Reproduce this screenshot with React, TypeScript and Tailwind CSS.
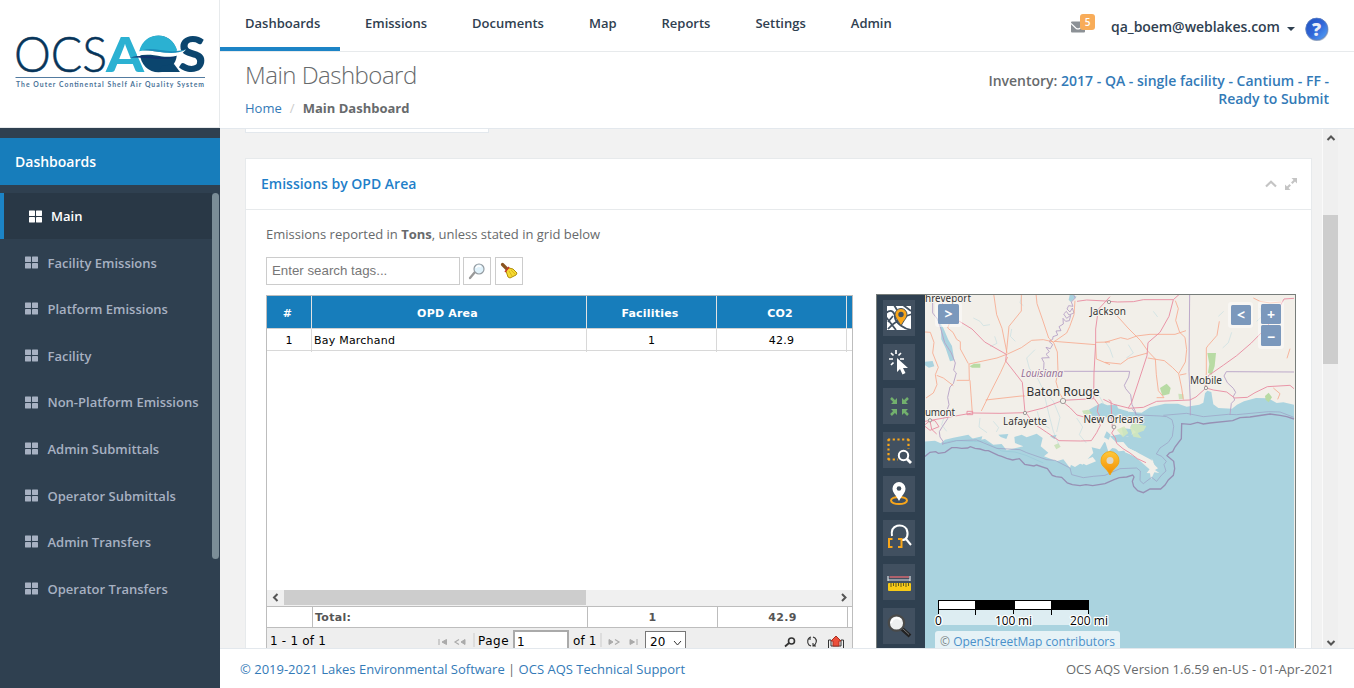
import React from "react";

const navItems = ["Dashboards", "Emissions", "Documents", "Map", "Reports", "Settings", "Admin"];
const sideItems = [
  "Facility Emissions",
  "Platform Emissions",
  "Facility",
  "Non-Platform Emissions",
  "Admin Submittals",
  "Operator Submittals",
  "Admin Transfers",
  "Operator Transfers",
];

function Logo() {
  return (
    <svg width="200" height="62" viewBox="10 31 200 62" className="block overflow-visible">
      <text x="14" y="72" fontFamily="Lato" fontWeight="300" fontSize="49" fill="#07355a" stroke="#07355a" strokeWidth=".5" textLength="93" lengthAdjust="spacingAndGlyphs">OCS</text>
      <text x="106" y="71.5" fontFamily="Lato" fontWeight="900" fontSize="48" fill="#2bb1d2" textLength="38" lengthAdjust="spacingAndGlyphs">A</text>
      <circle cx="158.500" cy="54" r="18.300" fill="#0b456e" />
      <path d="M162 66L174 64L180 72H158z" fill="#0b456e" />
      <path d="M139 52C142 40 150 35.500 158.500 35.500C167 35.500 174 41 177 49.500L175 53C160 54 153 48 139 52z" fill="#2bb1d2" />
      <text x="178" y="71.500" fontFamily="Lato" fontWeight="900" fontSize="49" fill="#0b456e" textLength="28" lengthAdjust="spacingAndGlyphs">S</text>
      <path d="M138 51.500C150 48 160 54.500 178 52L186 49.500C181 56 172 57.500 162 56.500C152 54.500 145 54 137 56z" fill="#fff" />
      <path d="M143 50C155 46.500 166 54.500 186 49.500C172 57 157 50 143 50z" fill="#1c8fbd" />
      <path d="M130 57.500C148 53 160 60 177 56.500C165 62 151 57 130 57.500z" fill="#10316f" />
      <path d="M15.500 77.500H205" stroke="#527ba0" strokeWidth="1" />
      <text x="16" y="87" fontFamily="Lato" fontWeight="700" fontSize="6.800" fill="#4a7297" textLength="188">The Outer Continental Shelf Air Quality System</text>
    </svg>
  );
}

function TilesIcon({ color }: { color: string }) {
  return (
    <svg width="13" height="13" viewBox="0 0 13 13" fill={color} className="block shrink-0">
      <rect x="0" y=".5" width="6" height="5.500" rx=".4" />
      <rect x="7" y=".5" width="6" height="5.500" rx=".4" />
      <rect x="0" y="7" width="6" height="5.500" rx=".4" />
      <rect x="7" y="7" width="6" height="5.500" rx=".4" />
    </svg>
  );
}

function Sidebar() {
  return (
    <aside className="flex h-[688px] w-[220px] shrink-0 flex-col bg-[#2f4050]">
      <div className="h-[128px] border-r border-b border-[#e7eaec] bg-white pt-[31px] pl-[10px]">
        <Logo />
      </div>
      <div className="mt-[10px] flex h-[47px] items-center bg-[#177dbb] pl-[15px] text-[14px] font-semibold text-white">Dashboards</div>
      <div className="mt-2 flex h-[366px] justify-between">
        <div className="w-[212px]">
          <div className="flex h-[46px] items-center border-l-4 border-[#1c84c6] bg-[#293846] pl-[25px] text-[13px] font-semibold text-white">
            <TilesIcon color="#fff" />
            <span className="ml-[9px] pt-[2px]">Main</span>
          </div>
          {sideItems.map((t) => (
            <div key={t} className="flex h-[46.600px] items-center pl-[25px] text-[13px] font-semibold text-[#a7b1c2]">
              <TilesIcon color="#a7b1c2" />
              <span className="ml-[9.500px] pt-[2px] whitespace-nowrap">{t}</span>
            </div>
          ))}
        </div>
        <div className="flex w-[8px] flex-col bg-[#2f4050]">
          <div className="h-[366px] w-[7px] rounded-full bg-[#7b8d97]" />
        </div>
      </div>
    </aside>
  );
}

function Header() {
  return (
    <header className="h-[129px] shrink-0 border-b border-[#e3e8ed] bg-white">
      <div className="flex h-[52px] justify-between border-b border-[#e7eaec]">
        <nav className="flex">
          {navItems.map((t, i) => (
            <div
              key={t}
              className={
                i === 0
                  ? "h-[51px] w-[120px] border-b-4 border-[#1c84c6] pt-[14px] pl-[25px] text-[13px] leading-[18px] font-semibold text-[#2f4050]"
                  : "h-[51px] pt-[14px] pr-[20px] pl-[25px] text-[13px] leading-[18px] font-semibold text-[#2f4050]"
              }
            >
              {t}
            </div>
          ))}
        </nav>
        <div className="flex pr-[25px]">
          <div className="relative mt-[21px] h-[12px] w-[40px]">
            <svg width="14" height="12" viewBox="0 0 14 12" className="block">
              <rect y=".5" width="14" height="11" rx="1" fill="#8c9196" />
              <path d="M0 2.500L5 7.200Q7 8.700 9 7.200L14 2.500" stroke="#fff" strokeWidth="1.200" fill="none" />
            </svg>
            <span className="absolute -top-[7px] left-[9px] flex h-[16px] w-[15px] items-center justify-center rounded-[3px] bg-[#f8ac59] text-[10px] leading-none font-semibold text-white">5</span>
          </div>
          <span className="w-[170px] pt-[17px] text-[14px] leading-[20px] tracking-[-0.05px] whitespace-nowrap text-[#2f4050]" style={{ fontWeight: 600 }}>qa_boem@weblakes.com</span>
          <svg width="8" height="4" viewBox="0 0 8 4" className="mt-[27px] ml-[6px]"><path d="M0 0H8L4 4z" fill="#2f4050" /></svg>
          <svg width="24" height="24" viewBox="0 0 24 24" className="mt-[17px] ml-[10px]">
            <defs>
              <linearGradient id="helpBlue" x1="0" y1="0" x2="1" y2="1">
                <stop offset="0" stopColor="#2253bd" />
                <stop offset=".5" stopColor="#2f65d8" />
                <stop offset="1" stopColor="#58a8fa" />
              </linearGradient>
            </defs>
            <circle cx="12" cy="12.500" r="11.500" fill="#a7b5c9" />
            <circle cx="11.700" cy="12" r="10.900" fill="url(#helpBlue)" stroke="#5a7fc4" strokeWidth=".8" />
            <text x="11.500" y="18.500" textAnchor="middle" fontFamily="Open Sans" fontWeight="800" fontSize="18" fill="#e8edf8">?</text>
          </svg>
        </div>
      </div>
      <div className="flex justify-between pr-[25px] pl-[25px]">
        <div>
          <h1 className="pt-[9px] text-[24px] leading-[27px] tracking-[-0.52px] text-[#676a6c]" style={{ fontWeight: 300 }}>Main Dashboard</h1>
          <div className="mt-[11px] flex text-[13px] leading-[19px] text-[#676a6c]">
            <a className="text-[#337ab7]">Home</a>
            <span className="w-[21px] text-center text-[#ccc]">/</span>
            <strong className="font-bold">Main Dashboard</strong>
          </div>
        </div>
        <div className="w-[350px] pt-[20px] text-right text-[14px] leading-[18px] text-[#676a6c]" style={{ fontWeight: 600 }}>
          Inventory: <span className="text-[#337ab7]">2017 - QA - single facility - Cantium - FF - Ready to Submit</span>
        </div>
      </div>
    </header>
  );
}

function ToolButton({ children }: { children: React.ReactNode }) {
  return (
    <div className="h-[36px] w-[32px] shrink-0 bg-[#415060]">
      <svg width="32" height="36" viewBox="0 0 32 36" className="block">{children}</svg>
    </div>
  );
}

function MapTools() {
  return (
    <div className="flex w-[48px] shrink-0 flex-col gap-2 bg-[#2f4050] pt-[5px] pl-[6px]">
      <ToolButton>
        <path d="M4 6H28V30H4z" fill="#fff" />
        <path d="M3 13C9 8 12 13 12 18C13 23 21 29 28 30M5 29C10 23 21 16 29 14M3 17L13 30M11 5L14 10M20 5L28 11M5 22L10 16" stroke="#415060" strokeWidth="1.800" fill="none" />
        <path d="M18 26C14 19 12 17 12 14.500a6 6 0 0 1 12 0C24 18 21 20 18 26z" fill="#f9a61a" stroke="#415060" strokeWidth="1" />
        <circle cx="18" cy="14.500" r="2.700" fill="#415060" />
      </ToolButton>
      <ToolButton>
        <path d="M14 14L14 28L17 25L19.500 30.500L22.500 29L20 24H25z" fill="#fff" />
        <path d="M13 6V10M6 15H10M17 15H21M8 9L10.500 11.500M18 9L15.500 11.500M8 21L10.500 18.500" stroke="#fff" strokeWidth="1.700" />
      </ToolButton>
      <ToolButton>
        <g stroke="#72b06d" strokeWidth="2.500" fill="none">
          <path d="M8 10L13 15M25 10L20 15M8 27L13 22M25 27L20 22" />
        </g>
        <path d="M8 16H14V10zM19 10V16H25zM8 21H14V27zM19 27V21H25z" fill="#72b06d" />
      </ToolButton>
      <ToolButton>
        <path d="M5 7.500H27M5 27.500H15M5.500 7V29M25.500 7V17" stroke="#f9a61a" strokeWidth="2.200" strokeDasharray="2.200 2.500" fill="none" />
        <circle cx="20.500" cy="23.500" r="4.700" stroke="#fff" strokeWidth="2" fill="none" />
        <path d="M24 27L28 31" stroke="#fff" strokeWidth="2.800" />
      </ToolButton>
      <ToolButton>
        <ellipse cx="16" cy="24.500" rx="8" ry="3.600" stroke="#f9a61a" strokeWidth="2" fill="none" />
        <path d="M16 25C13 19 9.500 17 9.500 12.500a6.500 6.500 0 0 1 13 0C22.500 17 19 19 16 25z" fill="#fff" />
        <circle cx="16" cy="12.500" r="2.300" fill="#415060" />
      </ToolButton>
      <ToolButton>
        <path d="M9 16C7 4 20 3 23.500 9C26 15 24 20 19 20M23 19L28 25" stroke="#fff" strokeWidth="2" fill="none" />
        <path d="M9.500 19H6V27H9.500M15 19H18.500V27H15" stroke="#f9a61a" strokeWidth="2" fill="none" />
      </ToolButton>
      <ToolButton>
        <path d="M5 12V17M27 12V17M5 16H27" stroke="#dde2e5" strokeWidth="1.200" />
        <path d="M6.500 13H26" stroke="#df6972" strokeWidth="1.400" />
        <rect x="5" y="19" width="23" height="8" rx="1" fill="#f7ca17" />
        <path d="M8 19V23M10.500 19V22M13 19V23M15.500 19V22M18 19V23M20.500 19V22M23 19V23M25.500 19V22" stroke="#645b1c" strokeWidth="1" />
      </ToolButton>
      <ToolButton>
        <path d="M18 20L27 28" stroke="#222" strokeWidth="4" />
        <path d="M20 21L26 26.500" stroke="#777" strokeWidth="1" />
        <circle cx="13.500" cy="15" r="7.700" fill="#eef0f0" stroke="#4a4a49" strokeWidth="2.300" />
        <path d="M8 15C10 9 15 9 18 12" stroke="#fff" strokeWidth="2" fill="none" />
      </ToolButton>
    </div>
  );
}

const coast =
  "M0 462L45 458L62 466L75 455L100 449L145 440L165 458L195 453L220 470L245 468L260 487L310 475L285 465L283 447L305 440L320 448L350 437L368 450L362 475L385 494L372 505L410 520L430 514L450 540L457 517L488 530L501 515L520 495L515 478L540 484L553 462L575 470L596 490L612 488L650 510L690 545L707 537L693 515L665 500L625 480L610 462L588 463L570 445L600 439L623 446L648 433L631 418L640 398L620 389L625 371L665 374L690 358L735 347L774 347L800 356L838 350L850 344L855 316L862 308L874 312L880 349L895 360L936 362L951 350L972 340L1008 330L1045 331L1070 345L1090 343L1122 350V1100H0z";
const baseline =
  "M67 468L110 458L170 456L230 481L300 485L320 494L380 515L405 517L450 540L455 560L490 569L520 565L555 562L600 542L650 540L661 549L660 578L670 587L695 568L710 580L724 562L738 549L732 530L739 520L725 505L709 498L720 480L745 463L757 445L761 415L756 395L740 386L720 384L675 382L650 380L636 362M730 382L800 376L850 386L925 379L950 380L1045 371L1080 372L1122 388";
const territorial =
  "M0 509L15 505L30 493L47 491L55 496L75 493L95 479L110 479L125 481L143 480L151 476L165 481L180 483L195 488L205 488L235 502L245 505L260 511L278 516L298 512L314 529L342 534L350 531L382 542L397 562L408 566L425 568L442 585L457 590L480 593L498 590L518 593L555 587L582 575L598 569L620 567L638 561L642 567L637 580L641 595L653 608L670 614L690 603L722 603L735 591L745 576L760 562L764 542L761 520L741 503L748 495L758 491L765 477L784 452L785 407L811 409L833 403L850 408L870 405L938 398L960 389L990 387L1050 378L1080 382L1100 386L1122 393";

function RegionMap() {
  return (
    <svg width="370" height="354" viewBox="925 295 370 354" className="block shrink-0 bg-[#f2efe9]">
      <g transform="translate(920 288) scale(.33333)">
        <path d={coast} fill="#aad3df" />
        <g fill="#aad3df">
          <path d="M50 90L70 120L85 155L96 174L103 217L90 220L77 181L64 154L63 125zM15 221L38 219L43 235L27 239L15 232z" />
          <path d="M450 17L470 26L452 42L446 35z" />
          <path d="M507 365L525 355L545 345L562 352L590 350L600 376L575 392L545 385L530 390L515 384z" />
          <path d="M590 360L624 370L630 390L612 398L598 385zM605 420L638 424L634 446L610 445zM560 430L572 440L566 455L552 448z" />
          <path d="M155 452L187 445L182 463L165 466zM235 440L265 438L259 453L242 447zM390 445L410 440L404 454z" />
        </g>
        <path d="M70 465L100 457L160 461L190 459L225 477L245 489L285 492L318 502L370 525" stroke="#9fcddb" strokeWidth="3" fill="none" />
        <g fill="#b8dba4">
          <path d="M862 195H888L884 235L875 260L864 254L868 228zM720 300L740 287L752 300L748 318L727 323zM1035 324L1046 314L1056 328L1046 343L1037 335zM149 235L162 227H181V239H156z" />
          <path d="M486 368L505 365L518 376L493 382zM402 472L415 466L422 476L409 484zM775 317L790 319L791 332L777 334z" opacity=".65" />
        </g>
        <g fill="#d4e7bb">
          <path d="M590 425L613 415L625 435L609 448zM630 420L643 399L655 409L679 414L671 428L653 435L665 451L640 446z" opacity=".85" />
        </g>
        <g fill="#f2efe9">
          <path d="M555 459L580 456L602 475L585 472L599 484L577 480L565 491zM605 463L626 481L650 492L676 514L701 519L690 529L674 524L640 503L615 493z" />
          <path d="M680 528L697 534L695 511L703 530L714 541L705 546L718 555L703 553L693 574L690 556L680 555L690 542zM440 524L451 508L463 517L483 510L502 513L518 507L528 520L499 532L485 524L465 537z" />
        </g>
        <g stroke="#b7d8df" strokeWidth="1.500" fill="none">
          <path d="M305 22L300 45L310 53M275 123L271 145L286 160M160 90L180 100L190 113L210 110M224 145L231 166L210 176M345 185L320 210L328 241L355 275L370 307L387 380L400 430L417 471M370 307L400 340L420 388L410 432M555 160L569 181L579 209M908 180L925 164L935 133M1020 60L1026 85L1010 100M895 85L911 70M700 70L713 87M625 170L640 195L619 210M530 312L541 330L552 350M470 390L488 417L478 440L499 465M75 380L65 410L80 430M180 390L177 417L201 434M220 400L236 419L229 432M352 370L360 405L389 421" />
        </g>
        <g stroke="#b7a2c6" strokeWidth="2.700" fill="none">
          <path d="M38 17V75L53 94L62 121L74 164L94 195L106 225L101 247L109 255L100 287L90 297L83 328L87 350L78 375L83 392L67 416L58 431L60 447L69 460L68 470" />
          <path d="M459 17L466 30L454 42L459 55L446 53L441 63L450 72L457 60L462 75L447 81L439 70L431 78L440 91L452 82L448 98L437 100L429 91L430 108L417 116L423 128L408 129L413 141L399 146L398 154L387 160L398 170L391 182L378 178L388 191L378 199L388 209L365 210L372 224L371 244L381 250H629L626 267L613 292L617 302L632 320L636 350L646 370L648 382" />
          <path d="M809 17L807 250L811 342V382M1122 252L919 251L912 264L922 284L940 301L947 313L940 325L944 336L934 346L930 380" />
        </g>
        <g stroke="#f7ab91" strokeWidth="2.600" fill="none">
          <path d="M221 17L230 80L246 121L261 195M304 17V69L267 115L259 197M348 17L351 47L368 96L386 150L401 164L412 192L414 250L408 281L417 313L430 334M465 38L462 80L449 116L440 135L401 162L370 155L335 157L304 179L263 198L231 210L147 228L148 277H110M263 207L242 253L212 312L184 369M145 227L121 183V161L110 154L99 133L83 120L90 102L80 78M15 132L31 133L42 163L38 195L55 238L46 260L51 290L40 315L18 330M50 262L70 270L100 293M150 277L157 375M197 336L304 324H315M402 160L527 170L529 213L570 230M527 163L570 162" />
          <path d="M591 83L624 120L661 157L685 191L706 213L709 260L715 308L732 329L710 329M555 163L602 149L623 154L650 144L690 139H765L798 128M555 223L602 228L625 211L683 195M766 38L775 62L767 97L779 133L795 148L800 185L796 222L776 257L757 238L733 218L683 210M776 257L785 300L790 335M799 257L780 261M898 100L891 142L864 173L859 180V255L855 300M1000 30L1020 40L1050 45L1084 42M1110 182L1101 211M1060 300L1080 317L1073 334" />
        </g>
        <g stroke="#e88ea3" strokeWidth="2.800" fill="none">
          <path d="M66 43L80 75L120 101L156 123L194 162L259 199L257 219L276 243L307 283L315 374L240 376L157 375L15 400M315 374L370 360L429 337L523 332L535 349L532 371L541 387L522 407L510 393M471 40L500 36L555 39L592 42M570 26L535 64L527 123V165L522 255L521 330M320 377L340 406L380 433L417 458L481 459L514 458L530 434L541 412L532 393M429 342L451 360L471 381L499 389L510 400" />
          <path d="M592 42L640 41L670 35L760 35L780 17M760 35L747 85L720 133L684 164L681 203L668 243L635 343L625 360L581 349L550 334M625 361L670 358L710 340L810 336L828 327L858 300L880 306L920 312L944 330L982 328L1005 314L1042 296L1110 292L1122 302M1122 31L1092 33L1073 68L1040 118L994 165L950 203L911 231L865 263L857 297M577 421L573 340L566 335M583 422L575 435L586 450L590 466L609 482L630 495L652 512L678 524" />
          <path d="M15 410L30 398L45 398L57 416L30 427L15 415M30 398L35 424L50 438M141 370V380H158V370z" />
        </g>
        <path d={baseline} fill="none" stroke="#9a9dc3" strokeWidth="2" />
        <path d={territorial} fill="none" stroke="#9790b4" strokeWidth="4" />
        <g fill="#f2efe9" stroke="#777" strokeWidth="2">
          <circle cx="429" cy="339" r="8" /><circle cx="315" cy="375" r="5" /><circle cx="30" cy="397" r="5" />
          <circle cx="582" cy="417" r="5.500" /><circle cx="567" cy="42" r="5" /><circle cx="858" cy="300" r="5" />
        </g>
      </g>
      <g fontFamily="Noto Sans" fill="#333" stroke="#f5f2ed" strokeWidth="2" paintOrder="stroke" strokeLinejoin="round">
        <text x="925" y="302" fontSize="10" textLength="46">hreveport</text>
        <text x="1090" y="315" fontSize="10" textLength="36">Jackson</text>
        <text x="1021" y="377" fontSize="10" fontStyle="italic" fill="#957197" textLength="42">Louisiana</text>
        <text x="1026.500" y="396" fontSize="12" textLength="73">Baton Rouge</text>
        <text x="925" y="416" fontSize="10" textLength="30">umont</text>
        <text x="1003" y="424.500" fontSize="10" textLength="44">Lafayette</text>
        <text x="1083.500" y="423" fontSize="10" textLength="60">New Orleans</text>
        <text x="1190" y="384" fontSize="10" textLength="32">Mobile</text>
      </g>
      <defs>
        <linearGradient id="pinFill" x1="0" y1="0" x2="0" y2="1"><stop stopColor="#ffc83b" /><stop offset="1" stopColor="#f28c00" /></linearGradient>
      </defs>
      <path d="M1110 475C1107 468 1101 467 1101 460.500a9 9 0 0 1 18 0C1119 467 1113 468 1110 475z" fill="url(#pinFill)" stroke="#f5a300" strokeWidth=".8" />
      <circle cx="1110" cy="460.500" r="3.500" fill="#ded8c8" />
      <g fill="#fff" fillOpacity=".45">
        <rect x="935" y="302" width="27" height="25" rx="3" />
        <rect x="1228" y="302" width="25" height="26" rx="3" />
        <rect x="1258" y="301" width="26" height="48" rx="3" />
      </g>
      <g fill="#7b98bc">
        <rect x="938" y="304" width="21" height="20" rx="1.500" /><rect x="1231" y="305" width="20" height="20" rx="1.500" />
        <rect x="1261" y="304" width="20" height="20" rx="1.500" /><rect x="1261" y="325" width="20" height="21" rx="1.500" />
      </g>
      <g fontFamily="Open Sans" fontWeight="700" fontSize="14" fill="#fff" textAnchor="middle">
        <text x="948.500" y="319">&gt;</text><text x="1241" y="320">&lt;</text><text x="1271" y="319.500">+</text><text x="1271" y="341.500">−</text>
      </g>
      <rect x="938" y="600" width="151" height="25" fill="#fff" fillOpacity=".6" />
      <rect x="938" y="600" width="151" height="10" />
      <path d="M939 601H975V609H939zM1015 601H1051V609H1015z" fill="#fff" />
      <path d="M938.500 600V614M975.500 600V615M1013.500 600V614M1051.500 600V615M1088.500 600V614" stroke="#000" />
      <g fontFamily="Open Sans" fontSize="12" fill="#000" stroke="#fff" strokeWidth="2.500" paintOrder="stroke" strokeLinejoin="round">
        <text x="935" y="625">0</text><text x="995" y="625" textLength="37">100 mi</text><text x="1070" y="625" textLength="38">200 mi</text>
      </g>
      <rect x="935" y="631" width="185" height="22" rx="3" fill="#fff" fillOpacity=".7" />
      <text x="940" y="646" fontFamily="Open Sans" fontSize="12" fill="#7d8788" textLength="175"><tspan>© </tspan><tspan fill="#4a90ca">OpenStreetMap contributors</tspan></text>
    </svg>
  );
}

function DataGrid() {
  return (
    <div className="flex h-[353px] w-[587px] flex-col overflow-hidden border border-b-0 border-[#bdbdbd] text-[11px] text-black" style={{ fontFamily: '"DejaVu Sans", sans-serif' }}>
      <div className="grid h-[33px] shrink-0 grid-cols-[45px_275px_130px_130px_5px] border-b border-[#d0d0d0] bg-[#177dbb] text-center leading-[35px] font-bold tracking-[0.2px] text-white">
        <div className="border-r border-[#e2e2e2] pr-[3px]">#</div>
        <div className="border-r border-[#e2e2e2] pr-[3px]">OPD Area</div>
        <div className="border-r border-[#e2e2e2] pr-[3px]">Facilities</div>
        <div className="border-r border-[#e2e2e2] pr-[3px]">CO2</div>
        <div />
      </div>
      <div className="grid h-[22px] shrink-0 grid-cols-[45px_275px_130px_130px_5px] border-b border-[#d8d8d8] text-center leading-[23px] tracking-[0.22px]">
        <div className="border-r border-[#d8d8d8]">1</div>
        <div className="border-r border-[#d8d8d8] pl-[2px] text-left">Bay Marchand</div>
        <div className="border-r border-[#d8d8d8]">1</div>
        <div className="border-r border-[#d8d8d8]">42.9</div>
        <div />
      </div>
      <div className="h-[239px] shrink-0" />
      <div className="flex h-[16px] shrink-0 bg-[#f0f0f0]">
        <svg width="17" height="15" viewBox="0 0 17 15"><path d="M10.500 4L7 7.500L10.500 11" stroke="#555" strokeWidth="2" fill="none" /></svg>
        <div className="h-[15px] w-[302px] bg-[#cdcdcd]" />
        <div className="grow" />
        <svg width="17" height="15" viewBox="0 0 17 15"><path d="M7 4L10.500 7.500L7 11" stroke="#555" strokeWidth="2" fill="none" /></svg>
      </div>
      <div className="grid h-[22px] shrink-0 grid-cols-[46px_275px_130px_130px_4px] border-y border-[#bdbdbd] text-center leading-[21px] font-bold tracking-[0.3px] text-[#555]">
        <div className="border-r border-[#bdbdbd]" />
        <div className="border-r border-[#bdbdbd] pl-[2px] text-left">Total:</div>
        <div className="border-r border-[#bdbdbd]">1</div>
        <div className="border-r border-[#bdbdbd]">42.9</div>
        <div />
      </div>
      <div className="flex h-[28px] shrink-0 bg-[#eee] pl-[3px] text-[12px] leading-[27px]">
        <span className="w-[167px] tracking-[0.2px]">1 - 1 of 1</span>
        <svg width="34" height="27" viewBox="0 0 34 27" className="shrink-0">
          <path d="M2 11V17M9.500 11.500V16.500L5 14zM28 11.500V16.500L24 14z" fill="#aaa" stroke="#aaa" />
          <path d="M22 11.500L18 14L22 16.500" fill="none" stroke="#aaa" strokeWidth="1.200" />
        </svg>
        <span className="ml-[2px] h-[14px] w-[2px] translate-y-[5px] bg-[#ddd]" />
        <span className="ml-[3px] w-[33px] tracking-[0.5px]">Page</span>
        <span className="mt-[2px] ml-[2px] h-[24px] w-[56px] border-2 border-[#aaa] bg-white pl-[2px] leading-[20px]">1</span>
        <span className="ml-[4px] w-[23px] tracking-[0.1px] whitespace-nowrap">of 1</span>
        <span className="ml-[4px] h-[14px] w-[2px] translate-y-[5px] bg-[#ddd]" />
        <svg width="34" height="27" viewBox="0 0 34 27" className="ml-[5px] shrink-0">
          <path d="M2 11.500V16.500L6 14zM23 11.500V16.500L27.500 14zM30 11V17" fill="#aaa" stroke="#aaa" />
          <path d="M8 11.500L12 14L8 16.500" fill="none" stroke="#aaa" strokeWidth="1.200" />
        </svg>
        <span className="mt-[3px] ml-[4px] flex h-[22px] w-[41px] border border-[#777] bg-white pl-[4px] leading-[20px]">
          20
          <svg width="9" height="7" viewBox="0 0 9 7" className="mt-[8px] ml-[8px]"><path d="M1 1L4.500 5L8 1" stroke="#333" fill="none" /></svg>
        </span>
        <svg width="63" height="27" viewBox="0 0 63 27" className="ml-[96px] shrink-0">
          <circle cx="9.500" cy="13" r="3" stroke="#333" strokeWidth="1.600" fill="none" /><path d="M7 15L3 18.500" stroke="#333" strokeWidth="1.800" />
          <path d="M29 9C25 10 25 15 27 17L29 18M28 9V12M31 18C35 16 35 12 33 10L31 9M31 15V18H34" stroke="#333" fill="none" strokeWidth="1.100" />
          <path d="M46.500 12H49V18H59V12H61.500V23H46.500z" stroke="#333" fill="#eee" />
          <path d="M49 13L54 8L59 13H57V18H51V13z" fill="#ec4f3b" stroke="#a93122" />
        </svg>
      </div>
    </div>
  );
}

function Panel() {
  return (
    <section className="mt-[25px] ml-[25px] w-[1067px] border border-[#e7eaec] bg-white">
      <div className="flex h-[51px] items-center justify-between border-b border-[#e7eaec] pr-[14px] pb-px pl-[15px]">
        <h2 className="text-[14px] font-semibold text-[#1f7fc9]">Emissions by OPD Area</h2>
        <div className="flex items-center gap-2">
          <svg width="12" height="8" viewBox="0 0 12 8"><path d="M1 6.500L6 1.800L11 6.500" stroke="#c4c4c4" strokeWidth="2.200" fill="none" /></svg>
          <svg width="12" height="12" viewBox="0 0 12 12" fill="#c4c4c4"><path d="M6.500 0H12V5.500L10 3.500L7.500 6L6 4.500L8.500 2zM5.500 12H0V6.500L2 8.500L4.500 6L6 7.500L3.500 10z" /></svg>
        </div>
      </div>
      <div className="flex gap-[23px] pl-[20px]">
        <div>
          <p className="mt-[15px] text-[13px] leading-[19px] text-[#676a6c]">Emissions reported in <strong>Tons</strong>, unless stated in grid below</p>
          <div className="mt-[13px] mb-[10px] flex h-[28px]">
            <div className="h-[28px] w-[194px] border border-[#ccc] pl-[5px] text-[13.300px] leading-[25px] text-[#777]" style={{ fontFamily: '"Liberation Sans", sans-serif' }}>Enter search tags...</div>
            <div className="ml-[3px] flex w-[28px] items-center justify-center border border-[#ccc]">
              <svg width="18" height="18" viewBox="0 0 18 18">
                <path d="M7 10L2 16" stroke="#999" strokeWidth="2.300" strokeLinecap="round" /><circle cx="11" cy="7" r="5" fill="#e0f2fb" stroke="#949ca2" strokeWidth="1.200" /><path d="M8 6C9 4 11 3 13 5" stroke="#fff" strokeWidth="1.500" fill="none" />
              </svg>
            </div>
            <div className="ml-[4px] flex w-[28px] items-center justify-center border border-[#ccc]">
              <svg width="18" height="18" viewBox="0 0 18 18">
                <path d="M2.500 2.500L7 7" stroke="#8a5420" strokeWidth="3.200" strokeLinecap="round" />
                <path d="M9 6L13 7L17 11L16 13L10 16L8 15L6 9z" fill="#f5da31" stroke="#b18e09" /><path d="M9 5L5 10" stroke="#c73a27" strokeWidth="1.500" /><path d="M9 9L12 14M11 8L15 12" stroke="#dcb51c" />
              </svg>
            </div>
          </div>
          <DataGrid />
        </div>
        <div className="mt-[84px] flex h-[355px] w-[420px] overflow-hidden border border-b-0 border-[#777d7a]">
          <MapTools />
          <RegionMap />
        </div>
      </div>
    </section>
  );
}

function ScrollBar() {
  return (
    <div className="flex w-[16px] shrink-0 flex-col items-center border-l border-[#fafafa] bg-[#efefef]">
      <svg width="10" height="8" viewBox="0 0 10 8" className="mt-[5px]"><path d="M1.500 6L5 2.500L8.500 6" stroke="#555" strokeWidth="2" fill="none" /></svg>
      <div className="mt-[73px] h-[149px] w-[15px] bg-[#cdcdcd]" />
      <div className="grow" />
      <svg width="10" height="8" viewBox="0 0 10 8" className="mb-[1px]"><path d="M1.500 2L5 5.500L8.500 2" stroke="#555" strokeWidth="2" fill="none" /></svg>
    </div>
  );
}

export default function App() {
  return (
    <div className="flex h-[688px] w-[1354px] overflow-hidden bg-[#f3f3f4]" style={{ fontFamily: '"Open Sans", sans-serif' }}>
      <Sidebar />
      <div className="flex h-[688px] w-[1134px] flex-col">
        <Header />
        <main className="flex h-[519px] shrink-0 overflow-hidden bg-[#f2f2f2]">
          <div className="h-[519px] w-[1102px] overflow-hidden">
            <div className="ml-[25px] h-[4px] w-[244px] border border-t-0 border-[#e3e8ed] bg-white" />
            <Panel />
          </div>
          <ScrollBar />
        </main>
        <footer className="flex h-[40px] shrink-0 items-center justify-between border-t border-[#e3e8ed] bg-white px-[20px] pt-[3px] text-[13px] text-[#676a6c]">
          <div><a className="text-[#337ab7]">© 2019-2021 Lakes Environmental Software</a> | <a className="text-[#337ab7]">OCS AQS Technical Support</a></div>
          <div>OCS AQS Version 1.6.59 en-US - 01-Apr-2021</div>
        </footer>
      </div>
    </div>
  );
}
